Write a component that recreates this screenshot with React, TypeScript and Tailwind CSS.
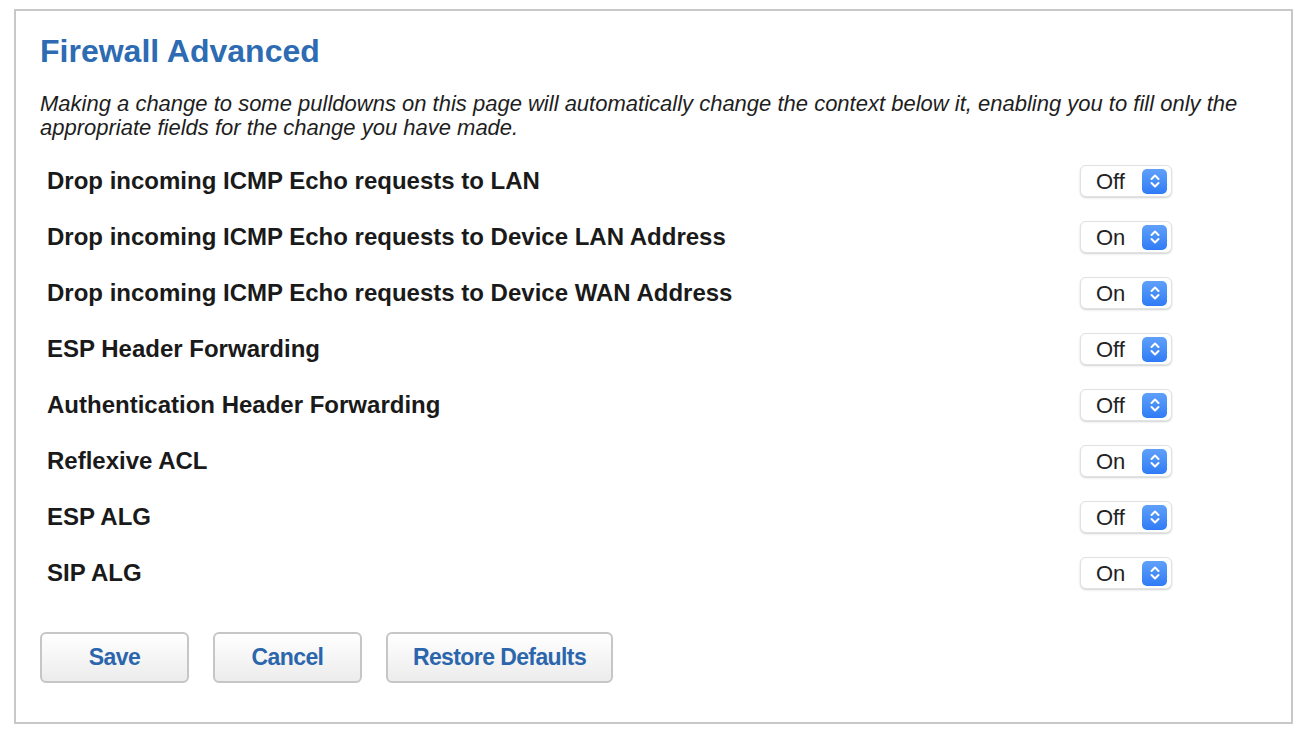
import React from "react";

const ROWS: { label: string; value: "On" | "Off" }[] = [
  { label: "Drop incoming ICMP Echo requests to LAN", value: "Off" },
  { label: "Drop incoming ICMP Echo requests to Device LAN Address", value: "On" },
  { label: "Drop incoming ICMP Echo requests to Device WAN Address", value: "On" },
  { label: "ESP Header Forwarding", value: "Off" },
  { label: "Authentication Header Forwarding", value: "Off" },
  { label: "Reflexive ACL", value: "On" },
  { label: "ESP ALG", value: "Off" },
  { label: "SIP ALG", value: "On" },
];

function Stepper() {
  return (
    <span className="flex items-center justify-center w-[25px] h-[25px] rounded-[5px] bg-gradient-to-b from-[#5fa0fa] to-[#2f7bf5]">
      <svg width="12" height="18" viewBox="0 0 12 18" fill="none">
        <path d="M2.5 7 L6 3.5 L9.5 7" stroke="white" strokeWidth="2" strokeLinecap="round" strokeLinejoin="round" />
        <path d="M2.5 11 L6 14.5 L9.5 11" stroke="white" strokeWidth="2" strokeLinecap="round" strokeLinejoin="round" />
      </svg>
    </span>
  );
}

function Select({ value }: { value: string }) {
  return (
    <div className="flex items-center justify-between w-[92px] h-[32px] pl-[15px] pr-[4px] rounded-[6px] bg-white border border-[#e2e2e2] shadow-[0_1px_2px_rgba(0,0,0,0.18)]">
      <span className="text-[22px] text-[#222]">{value}</span>
      <Stepper />
    </div>
  );
}

function Button({ children, width }: { children: React.ReactNode; width: string }) {
  return (
    <button
      className={
        "h-[51px] rounded-[6px] border-2 border-[#c6c6c6] bg-gradient-to-b from-white to-[#ececec] text-[23px] tracking-[-0.6px] font-bold text-[#2b66ad] " +
        width
      }
    >
      {children}
    </button>
  );
}

export default function App() {
  return (
    <div className="w-full h-[742px] bg-white pt-[9px] pl-[14px] font-['Liberation_Sans',Arial,sans-serif]">
      <div className="w-[1279px] h-[715px] border-2 border-[#c8c8c8] pl-[24px] pr-[119px] pt-[21px]">
        <h1 className="text-[32px] leading-[38px] font-bold text-[#2d6bb2]">Firewall Advanced</h1>
        <p className="mt-[22px] w-[1240px] text-[22px] leading-[24px] italic text-[#1e1e1e]">
          Making a change to some pulldowns on this page will automatically change the context below it, enabling you to
          fill only the appropriate fields for the change you have made.
        </p>
        <div className="mt-[13px] pl-[7px]">
          {ROWS.map((row) => (
            <div key={row.label} className="flex items-center justify-between h-[56px]">
              <span className="text-[24px] font-bold text-[#1a1a1a]">{row.label}</span>
              <Select value={row.value} />
            </div>
          ))}
        </div>
        <div className="flex gap-[24px] mt-[31px]">
          <Button width="w-[149px]">Save</Button>
          <Button width="w-[149px]">Cancel</Button>
          <Button width="w-[227px]">Restore Defaults</Button>
        </div>
      </div>
    </div>
  );
}
